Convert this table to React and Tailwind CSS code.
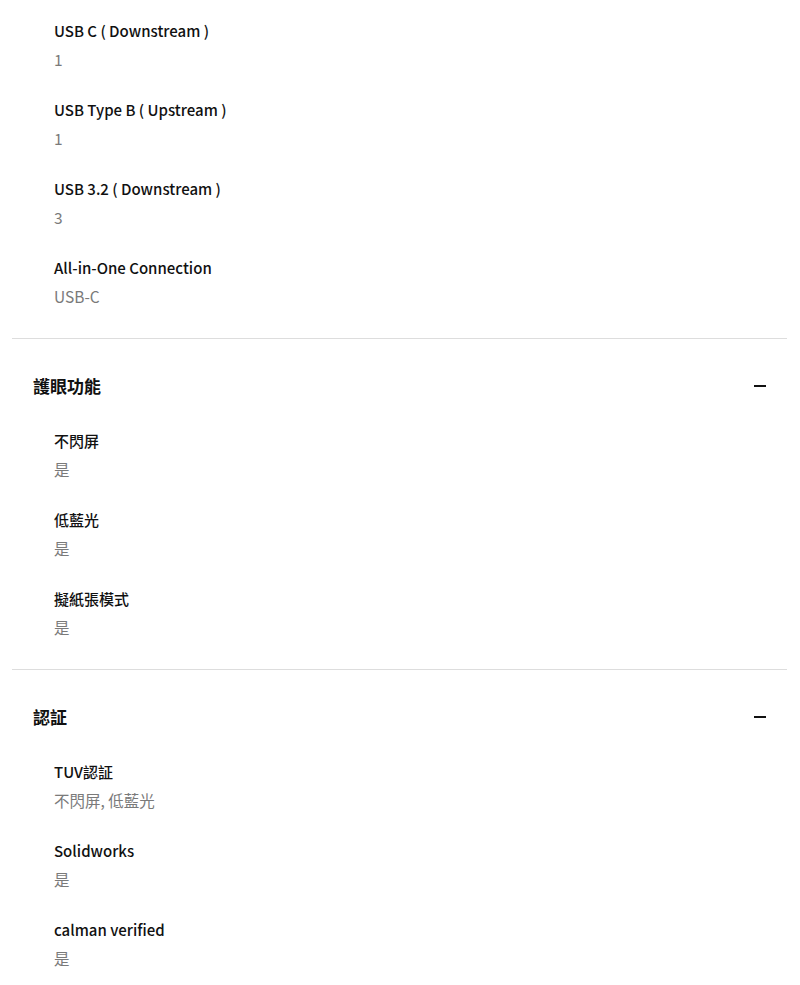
import React from 'react';

const font = { fontFamily: '"Noto Sans CJK TC", "Noto Sans", sans-serif' };

const sections = [
  {
    title: null,
    items: [
      { label: 'USB C ( Downstream )', value: '1' },
      { label: 'USB Type B ( Upstream )', value: '1' },
      { label: 'USB 3.2 ( Downstream )', value: '3' },
      { label: 'All-in-One Connection', value: 'USB-C' },
    ],
  },
  {
    title: '護眼功能',
    items: [
      { label: '不閃屏', value: '是' },
      { label: '低藍光', value: '是' },
      { label: '擬紙張模式', value: '是' },
    ],
  },
  {
    title: '認証',
    items: [
      { label: 'TUV認証', value: '不閃屏, 低藍光' },
      { label: 'Solidworks', value: '是' },
      { label: 'calman verified', value: '是' },
    ],
  },
];

const SpecItem = ({ label, value }) => (
  <div className="flex flex-col gap-1">
    <div className="h-6 leading-6 text-[15px] font-medium text-[#111]">{label}</div>
    <div className="h-6 leading-6 text-[15.5px] text-[#7a7a7a]">{value}</div>
  </div>
);

const Section = ({ title, items }) => (
  <div className="px-[21px]">
    {title && (
      <div className="flex items-center justify-between h-6 mt-[35px] mb-[31px]">
        <h3 className="text-[17px] font-bold text-[#111] leading-6">{title}</h3>
        <span className="block w-3 h-[2px] bg-[#111]" />
      </div>
    )}
    <div className="flex flex-col gap-[27px] pl-[21px] pb-[30px]">
      {items.map((it) => (
        <SpecItem key={it.label} {...it} />
      ))}
    </div>
  </div>
);

export default function App() {
  return (
    <div className="bg-white w-[800px] min-h-[985px] pt-[19px] pl-3 pr-[13px]" style={font}>
      {sections.map((s, i) => (
        <div key={i} className={i > 0 ? 'border-t border-[#ddd]' : ''}>
          <Section {...s} />
        </div>
      ))}
    </div>
  );
}
